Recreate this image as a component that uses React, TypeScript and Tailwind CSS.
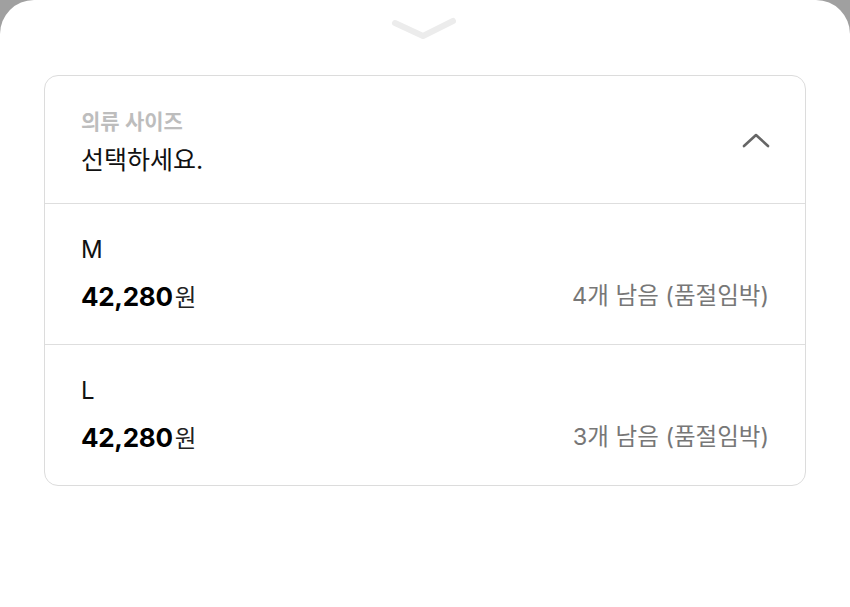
import React from "react";

const font = { fontFamily: '"Inter", "Noto Sans CJK KR", sans-serif' };

function Row({ size, left }: { size: string; left: string }) {
  return (
    <div className="h-[141px] border-t border-[#dedede] px-[36px] flex flex-col justify-center">
      <div className="text-[24px] leading-[30px] text-[#111] mt-[2px]">{size}</div>
      <div className="flex items-center justify-between mt-[12px]">
        <div className="flex items-baseline">
          <span className="text-[26px] font-bold text-black tracking-[-0.3px]">42,280</span>
          <span className="text-[23.5px] text-[#222] ml-[2px]">원</span>
        </div>
        <span className="text-[23.5px] text-[#777]">{left}</span>
      </div>
    </div>
  );
}

export default function App() {
  return (
    <div className="w-[850px] h-[607px] bg-[#a0a0a0] overflow-hidden" style={font}>
      <div className="w-full h-full bg-white rounded-t-[34px] flex flex-col items-center">
        <svg width="70" height="24" viewBox="0 0 70 24" className="mt-[16px]">
          <path d="M5 7 L33 20 L63 5" stroke="#ececec" strokeWidth="6" fill="none" strokeLinecap="round" strokeLinejoin="round" />
        </svg>
        <div className="w-[762px] mt-[35px] border border-[#dcdcdc] rounded-[14px] overflow-hidden">
          <div className="h-[127px] px-[36px] flex items-center justify-between">
            <div className="flex flex-col mt-[4px]">
              <span className="text-[21px] font-semibold text-[#bdbdbd] leading-[28px]">의류 사이즈</span>
              <span className="text-[25px] text-[#111] leading-[32px] mt-[8px]">선택하세요.</span>
            </div>
            <svg width="28" height="16" viewBox="0 0 28 16" className="mr-[-1px]">
              <path d="M2 14 L14 3 L26 14" stroke="#666" strokeWidth="2.6" fill="none" strokeLinecap="round" strokeLinejoin="round" />
            </svg>
          </div>
          <Row size="M" left="4개 남음 (품절임박)" />
          <Row size="L" left="3개 남음 (품절임박)" />
        </div>
      </div>
    </div>
  );
}
